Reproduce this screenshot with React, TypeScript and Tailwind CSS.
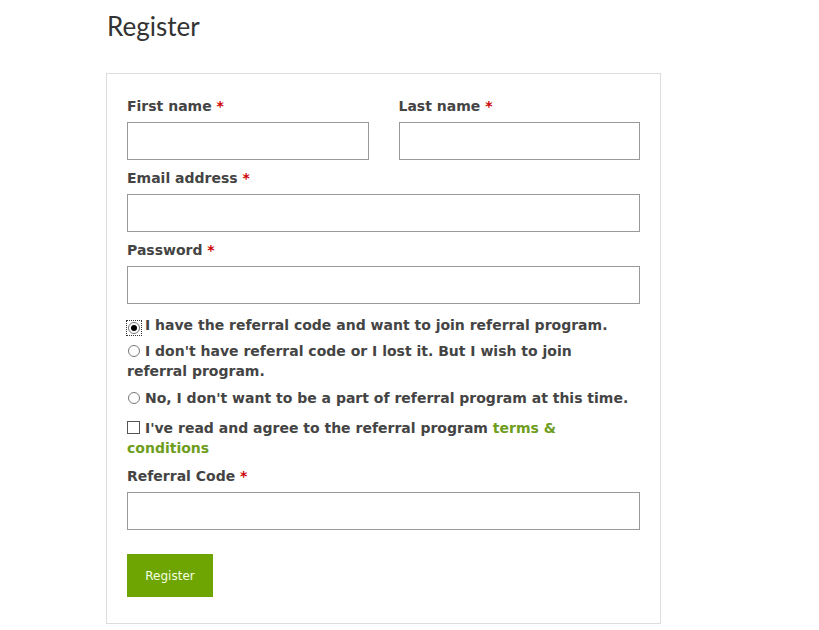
import { useState } from "react";

const verdana = "font-['DejaVu_Sans','Verdana',sans-serif]";

function Label({ text }: { text: string }) {
  return (
    <label className="block text-[14px] font-bold leading-[20px] text-[#444] mb-[6px]">
      {text} <span className="text-[#c00]">*</span>
    </label>
  );
}

function Field({ text, className = "" }: { text: string; className?: string }) {
  return (
    <div className={className}>
      <Label text={text} />
      <input
        type="text"
        className="block w-full h-[38px] border border-[#999] bg-white px-2 text-[13px] outline-none"
      />
    </div>
  );
}

function Radio({ checked, onClick }: { checked: boolean; onClick: () => void }) {
  return (
    <span
      onClick={onClick}
      className={`relative inline-flex align-[-1px] items-center justify-center w-[14px] h-[14px] mr-[4px] ${
        checked ? "outline outline-1 outline-dotted outline-[#333]" : ""
      }`}
    >
      <span className="flex items-center justify-center w-[12px] h-[12px] rounded-full border border-[#777] bg-white">
        {checked && <span className="block w-[6px] h-[6px] rounded-full bg-black" />}
      </span>
    </span>
  );
}

export default function App() {
  const [choice, setChoice] = useState(0);
  const [agree, setAgree] = useState(false);

  const options = [
    "I have the referral code and want to join referral program.",
    "I don't have referral code or I lost it. But I wish to join referral program.",
    "No, I don't want to be a part of referral program at this time.",
  ];

  return (
    <div className="min-h-screen bg-white">
      <div className="ml-[106px] w-[555px] pt-[8px]">
        <h1 className="font-['Lato',sans-serif] text-[26px] leading-[36px] text-[#333] pl-[1px] mb-[29px]">
          Register
        </h1>

        <div className={`border border-[#ddd] px-[20px] pt-[22px] pb-[26px] ${verdana}`}>
          <div className="grid grid-cols-2 gap-x-[30px] mb-[8px]">
            <Field text="First name" />
            <Field text="Last name" />
          </div>
          <Field text="Email address" className="mb-[8px]" />
          <Field text="Password" className="mb-[11px]" />

          <div className="flex flex-col gap-[6px] pr-[10px] text-[14px] font-bold leading-[20px] text-[#444]">
            {options.map((o, i) => (
              <p key={i} className={i === 2 ? "mt-[1px]" : ""}>
                <Radio checked={choice === i} onClick={() => setChoice(i)} />
                {o}
              </p>
            ))}
          </div>

          <p className="mt-[10px] pr-[10px] text-[14px] font-bold leading-[20px] text-[#444]">
            <span
              onClick={() => setAgree(!agree)}
              className="inline-flex align-[-1px] mr-[5px] w-[13px] h-[13px] border border-[#555] bg-white items-center justify-center text-[10px] leading-none"
            >
              {agree ? "✓" : ""}
            </span>
            I've read and agree to the referral program{" "}
            <a href="#" className="text-[#6e9d1e]">
              terms &amp; conditions
            </a>
          </p>

          <Field text="Referral Code" className="mt-[8px] mb-[24px]" />

          <button
            type="button"
            className="block w-[86px] h-[43px] bg-[#6fa503] text-[#f2ffe0] text-[12px] font-normal"
          >
            Register
          </button>
        </div>
      </div>
    </div>
  );
}
